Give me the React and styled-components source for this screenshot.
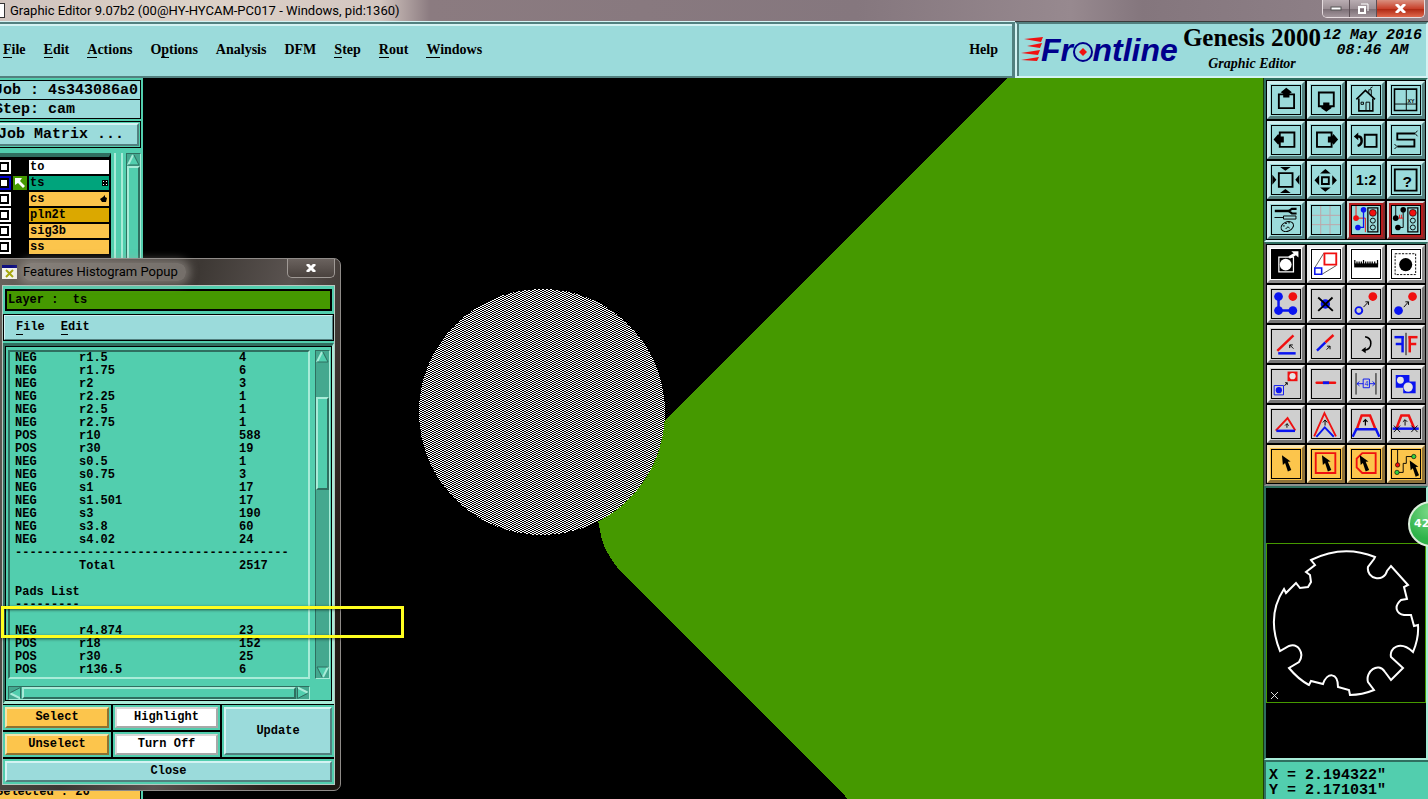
import React from 'react';
import styled, { createGlobalStyle, css } from 'styled-components';

const colors = {
  mint: '#52ceae',
  mintLight: '#a8ecd8',
  mintDark: '#2f6f60',
  mintTrough: '#44a88f',
  aqua: '#9bdbdb',
  aquaLight: '#d4f3f3',
  aquaDark: '#52807f',
  orange: '#fcc54c',
  green: '#459900',
  blue: '#0a14f0',
  red: '#f01010',
};

const mono = '"Liberation Mono", monospace';
const serif = '"Liberation Serif", serif';
const caption = 'Roboto, "Noto Sans", sans-serif';

const GlobalStyle = createGlobalStyle`
  * {
    box-sizing: border-box;
  }

  body {
    margin: 0;
    background: #000;
    color: #000;
  }

  button {
    margin: 0;
    padding: 0;
    color: #000;
    cursor: pointer;
  }
`;

const bevel = (light, dark, width = 2) => css`
  border-style: solid;
  border-width: ${width}px;
  border-color: ${light} ${dark} ${dark} ${light};
`;

const Window = styled.div`
  position: relative;
  display: flex;
  flex-direction: column;
  min-height: 100vh;
  overflow: hidden;
`;

const TitleBar = styled.header`
  display: flex;
  justify-content: space-between;
  height: 22px;
  padding: 0 3px 0 0;
  background: linear-gradient(90deg, #cfc3bd 0, #ddd2c8 200px, #d3c6c0 380px, #8b7b80 430px, #85777e 60%, #97898f 75%, #84767d 80%, #92848b 100%);
  border-bottom: 1px solid #3c3c3c;
`;

const TitleText = styled.div`
  display: flex;
  align-items: center;
  gap: 5px;
  font: 13px/20px ${caption};

  &::before {
    content: '';
    width: 4px;
    height: 13px;
    background: #fff;
    border: 1px solid #333;
    border-left: 0;
  }
`;

const WindowButtons = styled.div`
  display: flex;
  height: 18px;
  border: 1px solid #e6dcdf;
  border-top: 0;
  border-radius: 0 0 5px 5px;
  overflow: hidden;
`;

const WindowButton = styled.button`
  display: grid;
  place-items: center;
  width: ${props => (props.$close ? 47 : 27)}px;
  border: 0;
  border-right: ${props => (props.$close ? 0 : 1)}px solid #5c4f55;
  background: ${props => props.$close
    ? 'linear-gradient(#d9907f, #c8422c 50%, #b02a14 55%, #e0684c)'
    : 'linear-gradient(#b9adb2, #9c8f95 50%, #7d7077 55%, #a3969c)'};
`;

const TopRow = styled.div`
  display: flex;
  height: 56px;
  background: ${colors.aqua};
`;

const MenuBar = styled.nav`
  display: flex;
  flex: 1;
  align-items: center;
  gap: 18px;
  padding: 0 14px 0 3px;
  border: 3px solid ${colors.aquaDark};
  border-width: 2px 3px 2px 0;
  box-shadow: inset 0 2px ${colors.aquaLight}, 0 -1px ${colors.aquaLight};
`;

const MenuItem = styled.button`
  border: 0;
  background: none;
  font: bold 14px/18px ${serif};

  &:last-child {
    margin-left: auto;
  }
`;

const Mnemonic = styled.span`
  border-bottom: 1px solid #000;
`;

const Brand = styled.div`
  display: flex;
  width: 413px;
  padding-left: 3px;
  border: 2px solid ${colors.aquaLight};
  border-top-color: ${colors.aquaDark};
  box-shadow: inset 2px 0 ${colors.aquaDark};
`;

const BrandTitles = styled.div`
  width: 142px;
  text-align: center;
  white-space: nowrap;
`;

const ProductName = styled.h1`
  margin: 0;
  font: bold 25px/28px ${serif};
`;

const ProductPart = styled.div`
  font: italic bold 14px/24px ${serif};
`;

const Clock = styled.time`
  flex: 1;
  padding: 4px 4px 0 0;
  font: italic bold 15px/15px ${mono};
  text-align: center;
  white-space: nowrap;
`;

const Main = styled.main`
  display: flex;
  flex: 1;
`;

const Sidebar = styled.aside`
  display: flex;
  flex-direction: column;
  width: 143px;
  padding-top: 2px;
  overflow: hidden;
  background: ${colors.mint};
`;

const JobLine = styled.div`
  height: 20px;
  margin: 0 2px -1px -7px;
  border: 1px solid #000;
  background: ${colors.aqua};
  font: bold 15px/20px ${mono};
  white-space: pre;
`;

const MatrixFrame = styled.div`
  margin: 3px 2px 0 -6px;
  padding: 1px;
  border: 1px solid #000;
`;

const MatrixButton = styled.button`
  width: 100%;
  height: 23px;
  ${bevel(colors.aquaLight, colors.aquaDark)}
  background: ${colors.aqua};
  font: bold 15px/17px ${mono};
  text-align: left;
  white-space: pre;
`;

const LayerArea = styled.div`
  display: flex;
  flex: 1;
  margin-top: 5px;
  gap: 3px;
`;

const LayerList = styled.div`
  flex: 1;
  margin-left: -3px;
  padding-top: 3px;
  border-top: 4px solid ${colors.mintDark};
  border-right: 2px solid #000;
  background: #000;
`;

const LayerRow = styled.div`
  display: grid;
  grid-template-columns: 14px 14px 1fr;
  gap: 2px;
  height: 14px;
  margin-bottom: 2px;
`;

const LayerTick = styled.label`
  display: flex;
  align-items: center;
  justify-content: flex-end;
  padding-right: 2px;
  background: ${props => (props.$active ? '#0000c8' : '#fff')};

  input {
    appearance: none;
    width: 10px;
    height: 10px;
    margin: 0;
    border: 2px solid #000;
    background: #fff;
  }
`;

const LayerMark = styled.span`
  display: flex;
  background: ${props => (props.$active ? colors.green : '#000')};
`;

const LayerName = styled.span`
  display: flex;
  align-items: center;
  justify-content: space-between;
  padding: 0 1px;
  background: ${props => props.$color};
  font: bold 12px/13px ${mono};
`;

const GrooveBar = styled.div`
  width: 9px;
  border: solid;
  border-width: 0 2px;
  border-color: ${colors.mintLight};
`;

const ScrollTrack = styled.div`
  display: flex;
  flex-direction: ${props => (props.$horizontal ? 'row' : 'column')};
  ${props => (props.$horizontal ? 'height: 14px' : 'width: 15px')};
  margin-right: ${props => props.$edge || 0}px;
  ${bevel(colors.mintDark, colors.mintLight, 1)}
  background: ${colors.mintTrough};
`;

const ScrollThumb = styled.div`
  flex: ${props => props.$size || 1};
  ${bevel(colors.mintLight, colors.mintDark)}
  background: ${colors.mint};
`;

const ScrollGap = styled.div`
  flex: ${props => props.$size};
`;

const ArrowButton = styled.button`
  display: flex;
  width: 13px;
  height: 12px;
  border: 0;
  background: none;
  transform: rotate(${props => props.$turn}deg);
`;

const SidebarStatus = styled.div`
  height: 20px;
  margin: 0 2px 0 -5px;
  border: 1px solid #000;
  border-bottom: 0;
  background: ${colors.orange};
  font: bold 12px/25px ${mono};
  white-space: pre;
`;

const Canvas = styled.div`
  flex: 1;
  min-width: 0;
  height: calc(100vh - 78px);

  svg {
    display: block;
    width: 100%;
    height: 100%;
  }
`;

const ToolPanel = styled.aside`
  display: flex;
  flex-direction: column;
  width: 165px;
  border-left: 1px solid #1d3d08;
`;

const ToolGroup = styled.div`
  display: grid;
  grid-template-columns: repeat(4, 38px);
  grid-auto-rows: 38px;
  gap: 2px;
  padding: 1px;
  border: 2px solid ${props => props.$light};
  border-top-color: ${colors.mintDark};
  border-left-color: ${props => props.$dark};
  background: #000;
`;

const toolTones = {
  aqua: [colors.aqua, '#cdeeee', '#55807f'],
  white: ['#ffffff', '#ececec', '#8c8c8c'],
  grey: ['#cfcfcf', '#f0f0f0', '#757575'],
  orange: [colors.orange, '#fbe6b4', '#8e713a'],
};

const ToolButton = styled.button`
  ${props => bevel(toolTones[props.$tone][1], toolTones[props.$tone][2], 3)}
  background: ${props => toolTones[props.$tone][0]};

  svg {
    display: block;
    margin: 1px;
    border: 1px solid #000;
  }
`;

const AlertToolButton = styled.button`
  ${bevel('#cfd6d4', '#7d2c2c')}
  box-shadow: inset 0 0 0 2px #b81c1c;
  background: ${colors.aqua};

  svg {
    display: block;
    margin: 2px;
    border: 1px solid #000;
  }
`;

const Preview = styled.div`
  position: relative;
  display: flex;
  flex: 1;
  align-items: center;
  border: 2px solid ${colors.mintLight};
  border-top-color: ${colors.mintDark};
  border-left-color: ${colors.mintDark};
`;

const Badge = styled.div`
  position: absolute;
  top: 13px;
  right: -28px;
  width: 46px;
  height: 46px;
  padding-left: 4px;
  border: 2px solid #dcefdc;
  border-radius: 50%;
  background: radial-gradient(circle at 50% 20%, #7fdc8a, #2fb34a 70%);
  color: #fff;
  font: bold 11px/42px "DejaVu Sans", sans-serif;
`;

const Coordinates = styled.div`
  height: 39px;
  padding: 6px 3px 0;
  border-top: 2px solid ${colors.mintDark};
  border-left: 2px solid ${colors.mintDark};
  background: ${colors.mint};
  font: bold 15px/15px ${mono};
  white-space: pre;
`;

const Popup = styled.section`
  position: absolute;
  top: 258px;
  left: -6px;
  width: 347px;
  padding: 0 5px 5px 7px;
  border: 1px solid #8f8b88;
  border-radius: 7px;
  background: linear-gradient(105deg, #6b645e 0, #5d5751 50px, #3d3834 200px, #5a5350 290px, #2a211c 400px, #1c1410 100%);
`;

const PopupCaption = styled.header`
  display: flex;
  align-items: center;
  height: 26px;
  gap: 6px;
  font: 13px/18px ${caption};
`;

const PopupTitle = styled.h2`
  margin: 0 auto 0 0;
  padding-right: 8px;
  border-radius: 8px;
  background: rgba(170, 164, 158, 0.5);
  box-shadow: 0 0 8px 4px rgba(170, 164, 158, 0.5);
  font: inherit;
`;

const PopupClose = styled.button`
  align-self: flex-start;
  display: grid;
  place-items: center;
  width: 48px;
  height: 19px;
  border: 1px solid #a09a96;
  border-top: 0;
  border-radius: 0 0 5px 5px;
  background: linear-gradient(#6a625e, #4a423e);
`;

const PopupBody = styled.div`
  border: 1px solid #b5c8c0;
  background: ${colors.mint};
`;

const LayerBar = styled.div`
  height: 22px;
  margin: 3px 2px;
  padding-left: 1px;
  border: 2px solid #000;
  background: ${colors.green};
  font: bold 12px/18px ${mono};
  white-space: pre;
`;

const PopupMenu = styled.nav`
  display: flex;
  gap: 16px;
  height: 27px;
  padding: 0 11px;
  ${bevel(colors.aquaLight, colors.aquaDark)}
  outline: 1px solid #000;
  outline-offset: -1px;
  background: ${colors.aqua};
`;

const PopupMenuItem = styled.button`
  border: 0;
  background: none;
  font: bold 12px/15px ${mono};
`;

const ListArea = styled.div`
  margin-top: 2px;
  border: 3px solid ${colors.mintLight};
  border-width: 3px 2px;
  border-top-color: ${colors.mintDark};
  border-left-color: ${colors.mintDark};
`;

const ListInner = styled.div`
  display: grid;
  grid-template-columns: 302px 15px;
  gap: 7px 5px;
  padding: 3px 1px 0 2px;
  border: 1px solid #000;
`;

const ListFrame = styled.div`
  overflow: hidden;
  ${bevel(colors.mintDark, colors.mintLight)}
`;

const FeatureTable = styled.table`
  width: 100%;
  margin-left: 5px;
  table-layout: fixed;
  border-collapse: collapse;
  font: bold 12px/13px ${mono};
  white-space: pre;

  td {
    height: 13px;
    padding: 0;
  }
`;

const Col = styled.col`
  width: ${props => props.$width}px;
`;

const Actions = styled.div`
  display: grid;
  grid-template-columns: 108px 107px 1fr;
  grid-template-rows: repeat(3, 25px);
  gap: 2px;
  padding-top: 1px;
  background: #000;
`;

const ActionCell = styled.div`
  display: flex;
  grid-area: ${props => props.$area};
  padding: 2px;
  background: ${colors.mint};
`;

const ActionButton = styled.button`
  flex: 1;
  ${props => bevel(props.$light, props.$dark)}
  background: ${props => props.$color};
  font: bold 12px/15px ${mono};
`;

const Marker = styled.div`
  position: absolute;
  top: 606px;
  left: 1px;
  width: 403px;
  height: 32px;
  border: 3px solid #ffff20;
  box-shadow: 0 1px 3px rgba(0, 0, 0, 0.6), inset 0 1px 3px rgba(0, 0, 0, 0.6);
`;

const menus = ['File', 'Edit', 'Actions', 'Options', 'Analysis', 'DFM', 'Step', 'Rout', 'Windows'];
const mnemonics = { File: 0, Edit: 0, Actions: 0, Options: 1, Step: 0, Rout: 0, Windows: 0 };

const layers = [
  { name: 'to', color: '#ffffff' },
  { name: 'ts', color: '#00a47c', active: true, icon: 'grid' },
  { name: 'cs', color: colors.orange, icon: 'hand' },
  { name: 'pln2t', color: '#dba800' },
  { name: 'sig3b', color: colors.orange },
  { name: 'ss', color: colors.orange },
];

const features = [
  ['NEG', 'r1.5', '4'],
  ['NEG', 'r1.75', '6'],
  ['NEG', 'r2', '3'],
  ['NEG', 'r2.25', '1'],
  ['NEG', 'r2.5', '1'],
  ['NEG', 'r2.75', '1'],
  ['POS', 'r10', '588'],
  ['POS', 'r30', '19'],
  ['NEG', 's0.5', '1'],
  ['NEG', 's0.75', '3'],
  ['NEG', 's1', '17'],
  ['NEG', 's1.501', '17'],
  ['NEG', 's3', '190'],
  ['NEG', 's3.8', '60'],
  ['NEG', 's4.02', '24'],
  ['-'.repeat(38)],
  ['', 'Total', '2517'],
  [''],
  ['Pads List'],
  ['---------'],
  [''],
  ['NEG', 'r4.874', '23'],
  ['POS', 'r18', '152'],
  ['POS', 'r30', '25'],
  ['POS', 'r136.5', '6'],
];

function MenuLabel({ text }) {
  const at = mnemonics[text];
  if (at === undefined) return text;
  return (
    <>
      {text.slice(0, at)}
      <Mnemonic>{text[at]}</Mnemonic>
      {text.slice(at + 1)}
    </>
  );
}

// The tool icons are drawn on a 90 unit square.
const Line = ({ d, c = '#000', w = 3, ...rest }) => (
  <path d={d} fill="none" stroke={c} strokeWidth={w} {...rest} />
);
const Dot = ({ x, y, r = 14, c = colors.blue, ...rest }) => <circle cx={x} cy={y} r={r} fill={c} {...rest} />;
const Shape = ({ d, c = '#000' }) => <path d={d} fill={c} />;
const cursorPath = 'M32 17 L35 48 L42 42 L51 69 L62 64 L51 38 L60 37 Z';

const Lights = () => (
  <>
    <Line d="M51 6 H83 V83 H51 Z" w={4} />
    <Dot x={67} y={22} r={11} c={colors.red} stroke="#000" strokeWidth="2" />
    <circle cx="67" cy="47" r="8" fill="none" stroke="#000" strokeWidth="3" />
    <circle cx="67" cy="69" r="8" fill="none" stroke="#000" strokeWidth="3" />
  </>
);

const viewTools = [
  { name: 'Pan up', icon: <><Line d="M22 27 H71 V71 H22 Z" w={6} /><Shape d="M46 6 L64 20 L56 25 V37 H36 V25 L28 20 Z" /></> },
  { name: 'Pan down', icon: <><Line d="M22 21 H70 V65 H22 Z" w={6} /><Shape d="M46 83 L64 70 L56 65 V53 H36 V65 L28 70 Z" /></> },
  {
    name: 'Home',
    icon: (
      <>
        <Line d="M14 43 L43 14 L74 43" w={5} />
        <Line d="M22 40 V80 H67 V40" w={5} />
        <Line d="M29 52 H37 V59 H29 Z M45 80 V52 H57 V80 M54 22 V12 H62 V30 M58 8 L66 3" />
      </>
    ),
  },
  {
    name: 'XY zoom',
    icon: (
      <>
        <Line d="M8 10 H79 V79 H8 Z" w={5} />
        <Line d="M46 10 V79 M8 58 H79" />
        <text x="50" y="54" fontFamily="Liberation Sans" fontSize="17" fontWeight="bold">XY</text>
      </>
    ),
  },
  { name: 'Pan left', icon: <><Line d="M25 21 H72 V67 H25 Z" w={6} /><Shape d="M5 43 L20 26 L25 34 H38 V53 H25 L20 60 Z" /></> },
  { name: 'Pan right', icon: <><Line d="M16 21 H63 V67 H16 Z" w={6} /><Shape d="M84 43 L69 26 L64 34 H51 V53 H64 L69 60 Z" /></> },
  { name: 'Previous view', icon: <><Line d="M41 28 H79 V67 H41 Z" w={6} /><Line d="M14 34 H22 Q31 35 31 48 Q31 60 18 64" w={8} /><Shape d="M6 34 L20 21 V46 Z" /></> },
  { name: 'Serpentine', icon: <><Line d="M74 24 H17 V44 H72 V66 H17" w={6} /><Line d="M82 15 L74 24 L82 33 M8 58 L16 66 L8 74" /></> },
  { name: 'Zoom out', icon: <><Line d="M22 23 H66 V67 H22 Z" w={6} /><Shape d="M26 3 H60 L43 15 Z M26 87 H60 L43 74 Z M1 28 L14 44 L1 60 Z M88 28 L75 44 L88 60 Z" /></> },
  { name: 'Zoom in', icon: <><Line d="M32 36 H54 V58 H32 Z" w={6} /><Shape d="M43 10 L60 24 H26 Z M43 83 L60 69 H26 Z M8 46 L23 30 V62 Z M80 46 L65 30 V62 Z" /></> },
  { name: 'Scale', icon: <text x="13" y="61" fontFamily="Liberation Sans" fontSize="45" fontWeight="bold">1:2</text> },
  { name: 'Help', icon: <><Line d="M9 11 H79 V79 H9 Z" w={6} /><text x="34" y="67" fontFamily="Liberation Sans" fontSize="50" fontWeight="bold">?</text></> },
  {
    name: 'Tools',
    icon: (
      <>
        <Line d="M9 16 H55" w={8} />
        <Line d="M79 9 H64 L54 16 L64 24 H79" w={7} />
        <Line d="M8 37 H37 M37 32 H77 V42 H37 Z" />
        <ellipse cx="49" cy="66" rx="21" ry="15" fill="none" stroke="#000" strokeWidth="3" transform="rotate(-25 49 66)" />
        <Line d="M35 64 h6 M42 56 h6 M52 54 h6 M44 74 q8 -12 12 -2" />
      </>
    ),
  },
  { name: 'Grid', icon: <Line d="M28 0 V90 M58 0 V90 M0 30 H90 M0 60 H90" c="#bfa3a6" /> },
  {
    name: 'Net colors',
    alert: true,
    icon: (
      <>
        <Line d="M13 0 V39 H43 V84" c={colors.red} />
        <Line d="M37 12 V69 H19" c={colors.blue} w={4} />
        <Dot x={13} y={39} r={9} c={colors.red} />
        <Dot x={37} y={12} r={9} />
        <Dot x={19} y={69} r={9} />
        <Lights />
      </>
    ),
  },
  {
    name: 'Net check',
    alert: true,
    icon: (
      <>
        <Line d="M12 0 V39 M36 12 V69 H19" />
        <Line d="M20 39 H36 M24 28 V39 M30 28 V39" c={colors.red} />
        <Dot x={12} y={39} r={9} c="#000" />
        <Dot x={36} y={12} r={9} c="#000" />
        <Dot x={19} y={69} r={9} c="#000" />
        <Lights />
      </>
    ),
  },
];

const editTools = [
  { name: 'Invert', tone: 'white', icon: <><Shape d="M0 0 H90 V90 H0 Z" /><Line d="M22 23 H69 V70 H22 Z" c="#fff" w={4} /><Dot x={44} y={47} r={19} c="#fff" /><Line d="M55 24 L76 12" c="#fff" w={9} /><Shape d="M62 4 H85 V24 Z" c="#fff" /></> },
  { name: 'Resize', tone: 'white', icon: <><Line d="M9 57 L38 10 M32 78 L78 50" w={2} /><Line d="M40 11 H78 V47 H40 Z" c={colors.red} w={6} /><Line d="M9 58 H31 V78 H9 Z" c={colors.blue} w={5} /></> },
  { name: 'Measure', tone: 'white', icon: <><Shape d="M7 43 H84 V56 H7 Z" /><Line d="M9 32 V46 M16 37 V46 M23 37 V46 M30 37 V46 M37 32 V46 M44 37 V46 M51 37 V46 M58 37 V46 M65 37 V46 M73 37 V46 M82 32 V46" w={4} /></> },
  { name: 'Select pad', tone: 'white', icon: <><Line d="M10 12 H76 V79 H10 Z" strokeDasharray="7 4" /><Dot x={44} y={47} r={21} c="#000" /></> },
  { name: 'Add feature', icon: <><Line d="M21 21 V66 H67" c={colors.blue} w={8} /><Dot x={21} y={21} /><Dot x={21} y={66} /><Dot x={67} y={66} /><Dot x={67} y={21} c={colors.red} /></> },
  { name: 'Delete feature', icon: <><Dot x={43} y={45} r={15} /><Line d="M20 24 L67 67 M66 24 L20 67" w={6} /></> },
  { name: 'Move feature', icon: <><circle cx="22" cy="66" r="11" fill="none" stroke={colors.blue} strokeWidth="6" /><Dot x={67} y={21} c={colors.red} /><Line d="M37 55 L53 38 M43 38 H53 V48" /></> },
  { name: 'Copy feature', icon: <><Dot x={21} y={66} /><Dot x={66} y={21} c={colors.red} /><Line d="M38 55 L53 38 M43 38 H53 V48" /></> },
  { name: 'Rotate line', icon: <><Line d="M17 67 L69 17" c={colors.red} w={8} /><Line d="M20 75 H76" c={colors.blue} w={8} /><Line d="M69 60 L57 48 M57 58 V48 H67" /></> },
  { name: 'Stretch line', icon: <><Line d="M16 66 L43 40" c={colors.blue} w={8} /><Line d="M43 40 L69 16" c={colors.red} w={8} /><Line d="M47 63 L58 52 M48 52 H58 V62" /></> },
  { name: 'Rotate', icon: <><Line d="M42 22 C66 26 68 60 40 65" w={5} /><Shape d="M30 65 L44 55 V75 Z" /></> },
  {
    name: 'Mirror',
    icon: (
      <>
        <g stroke={colors.blue} strokeWidth="8">
          <line x1="8" y1="23" x2="38" y2="23" />
          <line x1="34" y1="20" x2="34" y2="72" />
          <line x1="12" y1="45" x2="34" y2="45" />
        </g>
        <line x1="45" y1="9" x2="45" y2="81" stroke="#000" strokeWidth="3" />
        <g stroke={colors.red} strokeWidth="8">
          <line x1="53" y1="23" x2="82" y2="23" />
          <line x1="57" y1="20" x2="57" y2="72" />
          <line x1="57" y1="45" x2="78" y2="45" />
        </g>
      </>
    ),
  },
  { name: 'Replace', icon: <><Shape d="M50 5 H82 V36 H50 Z" c={colors.red} /><Dot x={66} y={20} r={10} c="#e6e6e6" /><Line d="M7 50 H37 V80 H7 Z" c={colors.blue} /><Dot x={22} y={65} r={10} /><Line d="M40 51 L49 41 M42 41 H49 V48" /></> },
  { name: 'Break line', icon: <><Line d="M15 41 H74" c={colors.red} w={8} strokeLinecap="round" /><Line d="M35 41 H55" c={colors.blue} w={9} /></> },
  {
    name: 'Spacing',
    icon: (
      <>
        <Line d="M13 10 V79 M77 10 V79" />
        <Line d="M16 44 H36 M56 44 H74 M24 37 L16 44 L24 51 M66 37 L74 44 L66 51 M36 29 H56 V57 H36 Z" c={colors.blue} />
        <text x="40" y="51" fontFamily="Liberation Sans" fontSize="22" fill={colors.blue}>4</text>
      </>
    ),
  },
  { name: 'Merge', icon: <><Shape d="M12 16 H56 V37 H76 V75 H36 V57 H12 Z" c={colors.blue} /><Dot x={27} y={33} r={11} c="#e6e6e6" /><Dot x={52} y={55} r={15} c="#e6e6e6" /></> },
  { name: 'Move segment', icon: <><Line d="M12 66 L50 26 L75 66" c={colors.red} w={6} /><Line d="M14 67 H74" c={colors.blue} w={8} /><Line d="M48 57 V44 M42 50 L48 44 L54 50" /></> },
  { name: 'Move corner', icon: <><Line d="M7 85 L40 10 L77 85" c={colors.red} w={6} /><Line d="M14 86 L41 56 L70 86" c={colors.blue} w={6} /><Line d="M42 50 V32 M35 40 L42 32 L49 40" /></> },
  { name: 'Move trapeze', icon: <><Line d="M16 60 L31 18 H58 L75 60" c={colors.red} w={8} /><Line d="M2 86 L14 62 H77 L88 86" c={colors.blue} w={8} /><Line d="M43 50 V32 M36 38 L43 31 L50 38" w={4} /></> },
  { name: 'Cut trapeze', icon: <><Line d="M14 60 L30 18 H54 L72 60" c={colors.red} w={8} /><Line d="M2 60 H86" c={colors.blue} w={8} /><Line d="M42 50 V32 M35 38 L42 31 L49 38 M6 50 L26 71 M26 50 L6 71 M62 50 L82 71 M82 50 L62 71" /></> },
  { name: 'Select', tone: 'orange', icon: <Shape d={cursorPath} /> },
  { name: 'Select in frame', tone: 'orange', icon: <><Line d="M12 10 H75 V74 H12 Z" c={colors.red} w={6} /><Shape d={cursorPath} /></> },
  { name: 'Select in polygon', tone: 'orange', icon: <><Line d="M33 10 H76 V74 H33 L15 56 V28 Z" c={colors.red} w={6} /><g transform="translate(-7 0)"><Shape d={cursorPath} /></g></> },
  {
    name: 'Select net',
    tone: 'orange',
    icon: (
      <>
        <Line d="M18 0 V44 M70 21 H46 V43 H36 V72 H16" />
        <Dot x={18} y={48} r={7} c={colors.red} stroke="#000" strokeWidth="2" />
        <Dot x={70} y={21} r={7} c="#30d040" stroke="#000" strokeWidth="2" />
        <Dot x={16} y={72} r={7} c="#30d040" stroke="#000" strokeWidth="2" />
        <g transform="translate(25 17)"><Shape d={cursorPath} /></g>
      </>
    ),
  },
];

function Tool({ tool, tone }) {
  const Button = tool.alert ? AlertToolButton : ToolButton;
  return (
    <Button type="button" aria-label={tool.name} $tone={tool.tone || tone}>
      <svg width="30" height="30" viewBox="0 0 90 90">{tool.icon}</svg>
    </Button>
  );
}

function Logo() {
  return (
    <svg width="161" height="52" viewBox="1020 24 161 52" role="img" aria-label="Frontline">
      <g fill="#f01010">
        <path d="M1024 39 L1043 37 L1041 42 Z" />
        <path d="M1027 46 L1042 43 L1040 48 Z" />
        <path d="M1021 53 L1040 50 L1038 55 Z" />
        <path d="M1021 60 L1039 57 L1037 61 Z" />
      </g>
      <text x="1041" y="61" fontFamily="Liberation Sans" fontSize="32" fontWeight="bold" fontStyle="italic" fill="#00008c">
        Fr<tspan fill="none">o</tspan>ntline
      </text>
      <circle cx="1083" cy="52" r="9" fill="none" stroke="#00008c" strokeWidth="2" />
      <path d="M1083 48 L1087 52 L1083 56 L1079 52 Z" fill="#f01010" />
    </svg>
  );
}

function Arrow({ turn = 0, label }) {
  return (
    <ArrowButton type="button" aria-label={label} $turn={turn}>
      <svg width="13" height="12" viewBox="0 0 13 12">
        <path d="M6 1 L12 11 H1 Z" fill={colors.mint} />
        <path d="M6 1 L1 11" stroke={colors.mintLight} strokeWidth="2" />
        <path d="M7 1 L12 11 H1" fill="none" stroke={colors.mintDark} strokeWidth="1" />
      </svg>
    </ArrowButton>
  );
}

function LayerIcon({ kind }) {
  if (kind === 'grid') {
    return (
      <svg width="6" height="6" viewBox="0 0 6 6" shapeRendering="crispEdges">
        <path d="M0 0 H6 V6 H0 Z" />
        <path d="M1 1 h1 v1 h-1 Z M4 1 h1 v1 h-1 Z M1 4 h1 v1 h-1 Z M4 4 h1 v1 h-1 Z" fill="#fff" />
      </svg>
    );
  }
  return (
    <svg width="9" height="8" viewBox="0 0 9 8">
      <path d="M1 4 L4 2 L6 0 L6 2 L8 3 L7 7 L3 7 Z" />
    </svg>
  );
}

function LeftPanel() {
  return (
    <Sidebar>
      <JobLine>Job : 4s343086a0</JobLine>
      <JobLine>Step: cam</JobLine>
      <MatrixFrame>
        <MatrixButton type="button">Job Matrix ...</MatrixButton>
      </MatrixFrame>
      <LayerArea>
        <LayerList>
          {layers.map((layer) => (
            <LayerRow key={layer.name}>
              <LayerTick $active={layer.active}>
                <input type="checkbox" aria-label={layer.name} />
              </LayerTick>
              <LayerMark $active={layer.active}>
                {layer.active && (
                  <svg width="14" height="14" viewBox="0 0 14 14">
                    <path d="M2 2 H9 L7 5 L12 10 L10 12 L5 7 L2 9 Z" fill="#fff" />
                  </svg>
                )}
              </LayerMark>
              <LayerName $color={layer.color}>
                {layer.name}
                {layer.icon && <LayerIcon kind={layer.icon} />}
              </LayerName>
            </LayerRow>
          ))}
        </LayerList>
        <GrooveBar />
        <ScrollTrack $edge={2}>
          <Arrow label="Scroll layers up" />
          <ScrollThumb />
        </ScrollTrack>
      </LayerArea>
      <SidebarStatus>Selected : 26</SidebarStatus>
    </Sidebar>
  );
}

function BoardView() {
  return (
    <Canvas>
      <svg viewBox="143 78 1120 721" preserveAspectRatio="xMinYMin slice" shapeRendering="crispEdges">
        <defs>
          <pattern id="stipple" width="4" height="2" patternUnits="userSpaceOnUse">
            <rect width="4" height="2" fill="#000" />
            <rect width="2" height="1" fill="#fff" />
            <rect x="2" y="1" width="2" height="1" fill="#fff" />
          </pattern>
        </defs>
        <path d="M1007 78 H1263 V799 H848 L617 567 Q606 553 602 540 L598 520 V487 Z" fill={colors.green} />
        <circle cx="542" cy="412" r="123" fill="url(#stipple)" />
      </svg>
    </Canvas>
  );
}

function RightPanel() {
  return (
    <ToolPanel>
      <ToolGroup $light={colors.aquaLight} $dark={colors.mintDark}>
        {viewTools.map((tool) => <Tool key={tool.name} tool={tool} tone="aqua" />)}
      </ToolGroup>
      <ToolGroup $light="#8f8f8f" $dark="#555">
        {editTools.map((tool) => <Tool key={tool.name} tool={tool} tone="grey" />)}
      </ToolGroup>
      <Preview>
        <svg width="160" height="160" viewBox="1266 543 160 160" fill="none">
          <rect x="1266" y="543" width="160" height="160" stroke={colors.green} strokeWidth="2" />
          <path
            d="M1311 560 Q1343 544 1375 557 L1374 559 L1368 567 C1366 579 1384 583 1387 571 L1391 566 L1408 585 L1404 587 L1407 599 L1401 600 C1393 607 1397 614 1404 615 L1411 615 L1414 626 L1418 625 Q1419 638 1413 652 C1400 640 1389 648 1391 657 L1403 668 L1391 680 L1385 672 C1378 661 1365 672 1368 682 L1374 690 Q1362 695 1350 695 L1349 690 L1338 687 C1338 672 1327 672 1323 684 L1311 681 L1309 685 Q1298 679 1289 668 L1299 662 C1305 653 1298 643 1289 646 L1280 651 Q1266 616 1284 589 L1286 593 L1296 583 L1300 588 L1308 587 L1311 582 L1310 575 L1306 572 L1315 565 Z"
            stroke="#fff"
            strokeWidth="2"
          />
          <path d="M1271 692 L1278 699 M1278 692 L1271 699" stroke="#ddd" />
        </svg>
        <Badge>42</Badge>
      </Preview>
      <Coordinates>{'X = 2.194322"\nY = 2.171031"'}</Coordinates>
    </ToolPanel>
  );
}

function HistogramPopup() {
  return (
    <Popup>
      <PopupCaption>
        <svg width="15" height="14" viewBox="0 0 15 14">
          <rect width="15" height="14" fill="#f4f4ec" />
          <rect width="15" height="3" fill="#101080" />
          <path d="M4 5 L11 12 M11 5 L4 12" stroke="#a8a810" strokeWidth="2" />
        </svg>
        <PopupTitle>Features Histogram Popup</PopupTitle>
        <PopupClose type="button" aria-label="Close popup">
          <svg width="10" height="8" viewBox="0 0 10 8">
            <path d="M1 0 L9 8 M9 0 L1 8" stroke="#fff" strokeWidth="3" />
          </svg>
        </PopupClose>
      </PopupCaption>
      <PopupBody>
        <LayerBar>{'Layer :  ts'}</LayerBar>
        <PopupMenu>
          <PopupMenuItem type="button"><MenuLabel text="File" /></PopupMenuItem>
          <PopupMenuItem type="button"><MenuLabel text="Edit" /></PopupMenuItem>
        </PopupMenu>
        <ListArea>
          <ListInner>
            <ListFrame>
              <FeatureTable>
                <colgroup>
                  <Col $width={64} />
                  <Col $width={160} />
                  <Col $width={74} />
                </colgroup>
                <tbody>
                  {features.map((row, index) => (
                    <tr key={index}>
                      {row.length === 1
                        ? <td colSpan={3}>{row[0]}</td>
                        : row.map((cell, column) => <td key={column}>{cell}</td>)}
                    </tr>
                  ))}
                </tbody>
              </FeatureTable>
            </ListFrame>
            <ScrollTrack>
              <Arrow label="Scroll up" />
              <ScrollGap $size={35} />
              <ScrollThumb $size={91} />
              <ScrollGap $size={180} />
              <Arrow label="Scroll down" turn={180} />
            </ScrollTrack>
            <ScrollTrack $horizontal>
              <Arrow label="Scroll left" turn={-90} />
              <ScrollThumb />
              <Arrow label="Scroll right" turn={90} />
            </ScrollTrack>
          </ListInner>
        </ListArea>
        <Actions>
          <ActionCell $area="1 / 1">
            <ActionButton type="button" $color={colors.orange} $light="#f7e3a8" $dark="#8e7130">Select</ActionButton>
          </ActionCell>
          <ActionCell $area="1 / 2">
            <ActionButton type="button" $color="#fff" $light="#d8d8d8" $dark="#a8a8a8">Highlight</ActionButton>
          </ActionCell>
          <ActionCell $area="1 / 3 / span 2">
            <ActionButton type="button" $color={colors.aqua} $light={colors.aquaLight} $dark={colors.aquaDark}>Update</ActionButton>
          </ActionCell>
          <ActionCell $area="2 / 1">
            <ActionButton type="button" $color={colors.orange} $light="#f7e3a8" $dark="#8e7130">Unselect</ActionButton>
          </ActionCell>
          <ActionCell $area="2 / 2">
            <ActionButton type="button" $color="#fff" $light="#d8d8d8" $dark="#a8a8a8">Turn Off</ActionButton>
          </ActionCell>
          <ActionCell $area="3 / 1 / auto / span 3">
            <ActionButton type="button" $color={colors.aqua} $light={colors.aquaLight} $dark={colors.aquaDark}>Close</ActionButton>
          </ActionCell>
        </Actions>
      </PopupBody>
    </Popup>
  );
}

function App() {
  return (
    <Window>
      <GlobalStyle />
      <TitleBar>
        <TitleText>Graphic Editor 9.07b2 (00@HY-HYCAM-PC017 - Windows, pid:1360)</TitleText>
        <WindowButtons>
          <WindowButton type="button" aria-label="Minimize">
            <svg width="12" height="5" viewBox="0 0 12 5"><rect x="1" y="1" width="10" height="3" fill="#fff" stroke="#555" /></svg>
          </WindowButton>
          <WindowButton type="button" aria-label="Restore">
            <svg width="12" height="12" viewBox="0 0 12 12" fill="none">
              <path d="M4 1 H11 V8" stroke="#fff" strokeWidth="1" />
              <rect x="2" y="4" width="6" height="6" stroke="#fff" strokeWidth="2" />
            </svg>
          </WindowButton>
          <WindowButton type="button" aria-label="Close" $close>
            <svg width="11" height="9" viewBox="0 0 11 9"><path d="M1 0 L10 9 M10 0 L1 9" stroke="#fff" strokeWidth="3" /></svg>
          </WindowButton>
        </WindowButtons>
      </TitleBar>
      <TopRow>
        <MenuBar>
          {menus.map((menu) => (
            <MenuItem key={menu} type="button"><MenuLabel text={menu} /></MenuItem>
          ))}
          <MenuItem type="button">Help</MenuItem>
        </MenuBar>
        <Brand>
          <Logo />
          <BrandTitles>
            <ProductName>Genesis 2000</ProductName>
            <ProductPart>Graphic Editor</ProductPart>
          </BrandTitles>
          <Clock>12 May 2016<br />08:46 AM</Clock>
        </Brand>
      </TopRow>
      <Main>
        <LeftPanel />
        <BoardView />
        <RightPanel />
      </Main>
      <HistogramPopup />
      <Marker />
    </Window>
  );
}

export default App;
